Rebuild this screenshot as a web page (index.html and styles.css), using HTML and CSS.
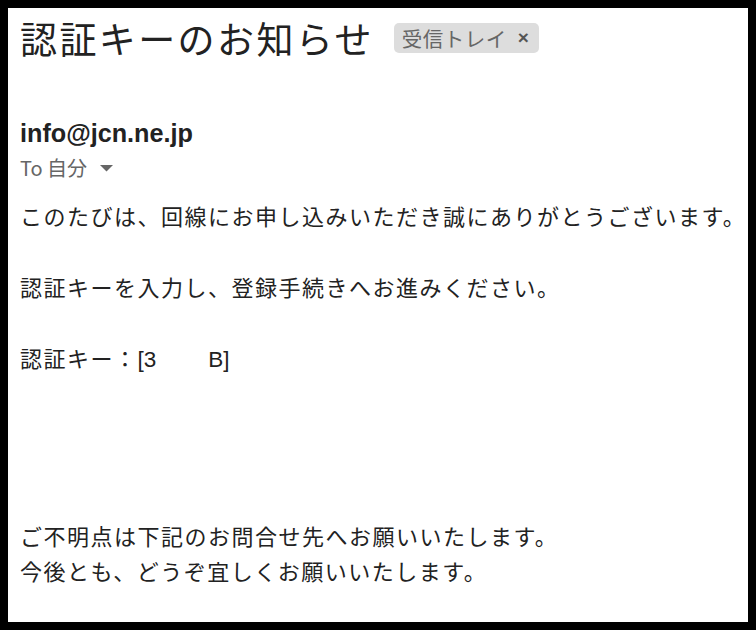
FILE: index.html
```html
<!DOCTYPE html>
<html lang="ja">
<head>
<meta charset="utf-8">
<link rel="stylesheet" href="styles.css">
</head>
<body>
<div class="mail">
  <div class="subject-row">
    <h1 class="subject">認証キーのお知らせ</h1>
    <span class="label">受信トレイ<span class="label-x">×</span></span>
  </div>
  <div class="sender">info@jcn.ne.jp</div>
  <div class="to">To 自分 <svg class="caret" width="13" height="7" viewBox="0 0 13 7"><path d="M0 0H13L6.5 6.5Z" fill="#666"/></svg></div>
  <div class="body">
    <p>このたびは、回線にお申し込みいただき誠にありがとうございます。</p>
    <p class="blank"></p>
    <p>認証キーを入力し、登録手続きへお進みください。</p>
    <p class="blank"></p>
    <p>認証キー：<span class="latin">[3<span class="gap"></span>B]</span></p>
    <p class="blank"></p>
    <p class="blank"></p>
    <p class="blank"></p>
    <p class="blank"></p>
    <p>ご不明点は下記のお問合せ先へお願いいたします。</p>
    <p>今後とも、どうぞ宜しくお願いいたします。</p>
  </div>
</div>
</body>
</html>
```

FILE: styles.css
```css
html {
  background: #000;
}
body {
  margin: 8px;
  background: #fff;
  height: 614px;
  overflow: hidden;
}
.mail {
  padding: 10px 0 0 12px;
  font-family: "Noto Sans CJK JP", "Liberation Sans", sans-serif;
  color: #222;
}
.subject-row {
  display: flex;
  align-items: center;
  height: 40px;
}
.subject {
  margin: 0;
  font-size: 37px;
  font-weight: 400;
  letter-spacing: 2.4px;
  line-height: 40px;
  color: #222;
}
.label {
  margin-left: 20px;
  height: 30px;
  padding: 0 10px 0 8px;
  border-radius: 5px;
  background: #ddd;
  color: #666;
  font-size: 20.5px;
  letter-spacing: 0.5px;
  line-height: 30px;
  display: inline-flex;
  align-items: center;
}
.label-x {
  font-family: "Liberation Sans", sans-serif;
  font-weight: 700;
  font-size: 19px;
  margin-left: 11px;
  color: #555;
}
.sender {
  margin-top: 60px;
  font-family: "Liberation Sans", sans-serif;
  font-weight: 700;
  font-size: 25.2px;
  line-height: 30px;
  color: #222;
}
.to {
  margin-top: 6px;
  font-size: 20px;
  line-height: 28px;
  color: #666;
  display: flex;
  align-items: center;
  gap: 7px;
}
.caret {
  margin-left: 6px;
}
.body {
  margin-top: 16px;
}
.body p {
  margin: 0;
  font-size: 22px;
  letter-spacing: 1.5px;
  line-height: 35.5px;
  height: 35.5px;
  white-space: nowrap;
}
.latin {
  font-family: "Liberation Sans", sans-serif;
  font-size: 22.5px;
  letter-spacing: 0;
}
.gap {
  display: inline-block;
  width: 52px;
}
```
